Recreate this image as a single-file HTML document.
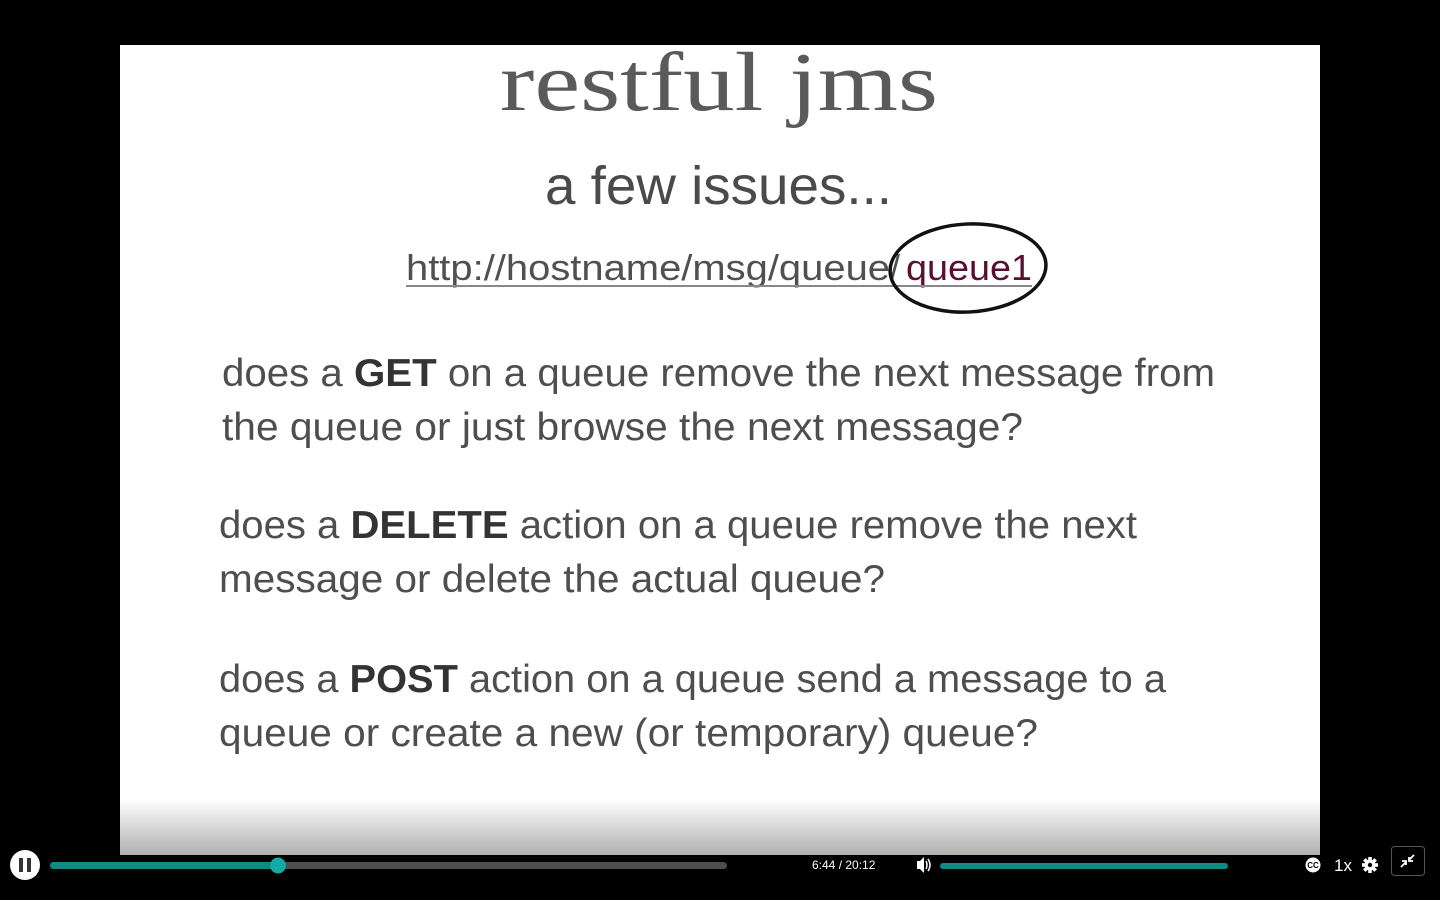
<!DOCTYPE html>
<html><head><meta charset="utf-8"><style>
html,body{margin:0;padding:0;background:#000;width:1440px;height:900px;overflow:hidden}
svg{position:absolute;left:0;top:0}
</style></head><body>
<svg width="1440" height="900" viewBox="0 0 1440 900" xmlns="http://www.w3.org/2000/svg">
<defs>
<linearGradient id="fade" x1="0" y1="0" x2="0" y2="1">
<stop offset="0" stop-color="#fff"/><stop offset="1" stop-color="#b0b0b0"/>
</linearGradient>
</defs>
<rect x="0" y="0" width="1440" height="900" fill="#000"/>
<rect x="120" y="45" width="1200" height="810" fill="#fff"/>
<rect x="120" y="800" width="1200" height="55" fill="url(#fade)"/>

<text x="500" y="110" font-family="Liberation Serif, serif" font-size="84" fill="#5a5a5a" textLength="438" lengthAdjust="spacingAndGlyphs">restful jms</text>
<text x="545" y="204" font-family="Liberation Sans, sans-serif" font-size="54" fill="#4a4a4a" textLength="347" lengthAdjust="spacingAndGlyphs">a few issues...</text>

<text x="406" y="280" font-family="Liberation Sans, sans-serif" font-size="36" fill="#505050" textLength="484" lengthAdjust="spacingAndGlyphs">http://hostname/msg/queue</text>
<text x="890" y="280" font-family="Liberation Sans, sans-serif" font-size="36" fill="#505050">/</text>
<text x="906" y="280" font-family="Liberation Sans, sans-serif" font-size="36" fill="#5a0f32" textLength="126" lengthAdjust="spacingAndGlyphs">queue1</text>
<line x1="406" y1="286" x2="1032" y2="286" stroke="#888" stroke-width="2"/>
<ellipse cx="968" cy="268" rx="78" ry="44" fill="none" stroke="#111" stroke-width="3.5" transform="rotate(-3 968 268)"/>

<g font-family="Liberation Sans, sans-serif" font-size="39" fill="#4e4e4e">
<text x="222" y="386" textLength="993" lengthAdjust="spacingAndGlyphs">does a <tspan font-weight="bold" fill="#333">GET</tspan> on a queue remove the next message from</text>
<text x="222" y="440" textLength="801" lengthAdjust="spacingAndGlyphs">the queue or just browse the next message?</text>
<text x="219" y="538" textLength="918" lengthAdjust="spacingAndGlyphs">does a <tspan font-weight="bold" fill="#333">DELETE</tspan> action on a queue remove the next</text>
<text x="219" y="592" textLength="666" lengthAdjust="spacingAndGlyphs">message or delete the actual queue?</text>
<text x="219" y="692" textLength="947" lengthAdjust="spacingAndGlyphs">does a <tspan font-weight="bold" fill="#333">POST</tspan> action on a queue send a message to a</text>
<text x="219" y="746" textLength="819" lengthAdjust="spacingAndGlyphs">queue or create a new (or temporary) queue?</text>
</g>

<!-- controls -->
<circle cx="25" cy="865" r="15" fill="#fff"/>
<rect x="19" y="858" width="4" height="14" fill="#333"/>
<rect x="27" y="858" width="4" height="14" fill="#333"/>
<rect x="50" y="862" width="677" height="7" rx="3.5" fill="#4d4d4d"/>
<rect x="50" y="862" width="228" height="7" rx="3.5" fill="#128a84"/>
<circle cx="278" cy="865.5" r="8" fill="#11aaa5"/>
<text x="812" y="869" font-family="Liberation Sans, sans-serif" font-size="12" fill="#fff">6:44 / 20:12</text>
<path d="M917 861h3l4-4v16l-4-4h-3z" fill="#fff"/>
<path d="M926 861q2 4 0 8M928 859q4 6 0 12" stroke="#fff" stroke-width="1.5" fill="none"/>
<rect x="940" y="863" width="288" height="6" rx="3" fill="#128a84"/>
<circle cx="1313" cy="865" r="7.5" fill="#fff"/>
<text x="1313" y="868" font-family="Liberation Sans, sans-serif" font-size="8" font-weight="bold" fill="#000" text-anchor="middle">CC</text>
<text x="1343" y="871" font-family="Liberation Sans, sans-serif" font-size="17" fill="#fff" text-anchor="middle">1x</text>
<g transform="translate(1370 865)">
<circle r="5.5" fill="#fff"/>
<g fill="#fff"><rect x="-1.8" y="-8" width="3.6" height="16"/><rect x="-1.8" y="-8" width="3.6" height="16" transform="rotate(45)"/><rect x="-1.8" y="-8" width="3.6" height="16" transform="rotate(90)"/><rect x="-1.8" y="-8" width="3.6" height="16" transform="rotate(135)"/></g>
<circle r="2.2" fill="#000"/>
</g>
<rect x="1391.5" y="846.5" width="33" height="29" rx="3" fill="none" stroke="#555"/>
<path d="M1401 867l5-5M1402 861h4v4M1414 855l-5 5M1413 861h-4v-4" stroke="#fff" stroke-width="1.8" fill="none"/>
</svg>
</body></html>
